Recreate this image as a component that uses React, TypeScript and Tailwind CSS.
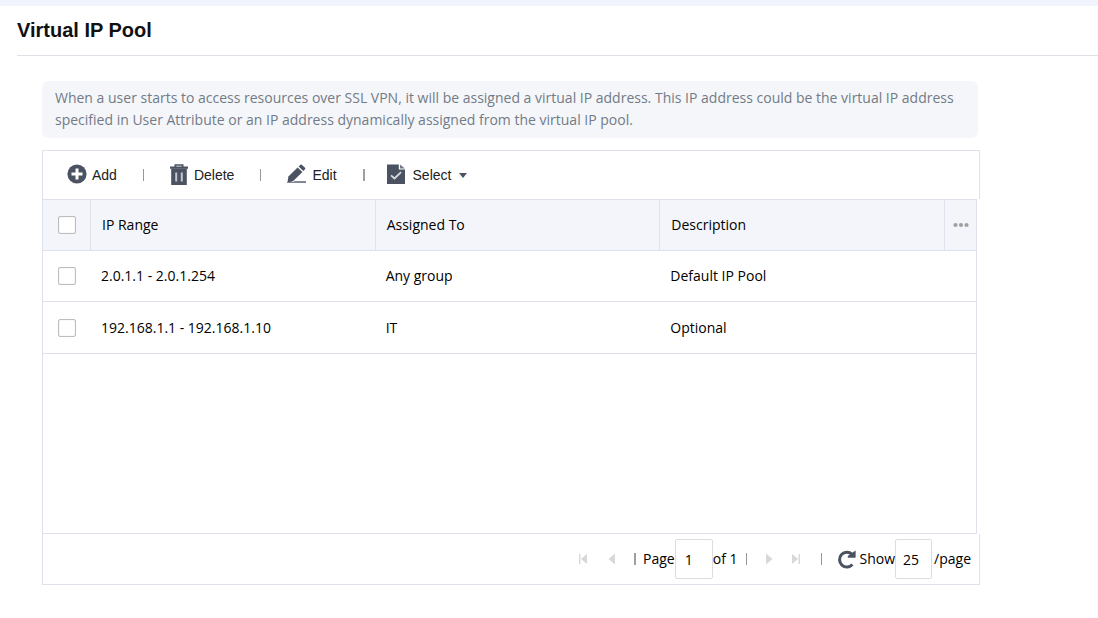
import React from "react";

const rows = [
  { range: "2.0.1.1 - 2.0.1.254", group: "Any group", description: "Default IP Pool", height: "h-[51px]" },
  { range: "192.168.1.1 - 192.168.1.10", group: "IT", description: "Optional", height: "h-[52px]" },
];

const Separator = ({ bold = false }: { bold?: boolean }) => (
  <span className={bold ? "h-3 w-0.5 shrink-0 bg-[#a0a0a0]" : "h-3 w-px shrink-0 bg-[#999999]"} />
);

const AddIcon = () => (
  <svg className="mb-0.5 size-5" viewBox="0 0 20 20" aria-hidden="true">
    <circle cx="10" cy="10" r="9.6" fill="#4b5262" />
    <path d="M8.5 4.5h3v4h4v3h-4v4h-3v-4h-4v-3h4z" fill="#fff" />
  </svg>
);

const DeleteIcon = () => (
  <svg className="mb-0.5 h-[21px] w-[18px]" viewBox="0 0 18 21" aria-hidden="true">
    <path d="M4.5 2.5V.3h9v2.2H18v2.2H0V2.5zm1.8 0h5.4v-.7H6.3z" fill="#4b5262" />
    <path d="M1.2 4.5h15.6V21H1.2z" fill="#4b5262" />
    <path d="M5.2 8.5h2v9h-2zM10.8 8.5h2v9h-2z" fill="#c3c6cc" />
  </svg>
);

const EditIcon = () => (
  <svg className="mb-0.5 size-5" viewBox="0 0 20 20" aria-hidden="true">
    <path d="M10.6 3.5 15.4 8 6 17.3.4 18.7l1-6.1z" fill="#4b5262" />
    <path d="m11.6 2.5 1.7-1.6c.5-.5 1.2-.5 1.7 0l3 2.8c.5.5.5 1.1 0 1.6L16.4 7z" fill="#4b5262" />
    <path d="M7.5 17H19v1.9H0V18h6.5z" fill="#828793" />
  </svg>
);

const SelectIcon = () => (
  <svg className="mb-0.5 h-5 w-[18px]" viewBox="0 0 18 20" aria-hidden="true">
    <path d="M0 .5h11.8v5H18V20H0z" fill="#4b5262" />
    <path d="M13 .5 18 4.6h-5z" fill="#747a87" />
    <path d="m4 11.3 3.5 3.2 6.6-6.3" fill="none" stroke="#d8dade" strokeWidth="1.8" />
  </svg>
);

const RefreshIcon = () => (
  <svg className="block h-5 w-[19px]" viewBox="0 0 19 20" aria-hidden="true">
    <path d="M15.4 15.6a7.4 7.4 0 1 1-.4-10.4l1 1" fill="none" stroke="#4b5262" strokeWidth="3" />
    <path d="M18.6 1.4v7.4h-7.8V7z" fill="#4b5262" />
  </svg>
);

const FirstIcon = () => (
  <svg className="h-3 w-2.5" viewBox="0 0 10 12" aria-hidden="true">
    <path d="M1 1h1.4v10H1zM9 1v10L3 6z" fill="#d8d8d8" />
  </svg>
);

const PrevIcon = () => (
  <svg className="h-3 w-2" viewBox="0 0 8 12" aria-hidden="true">
    <path d="M7 .5v11L.5 6z" fill="#d8d8d8" />
  </svg>
);

const checkboxClass =
  "block size-[18px] appearance-none rounded-xs border border-[#bdbdbd] bg-white shadow-[inset_0_0_1px_#bdbdbd] checked:bg-[#4b5262]";
const toolClass = "flex items-center gap-[5px]";
const headClass = "h-[51px] border-r border-b border-[#dfe1ec] pl-[11px] text-left font-normal";
const cellClass = "border-b border-[#dfe1ec] pl-2.5";

export default function App() {
  return (
    <main className="min-h-screen border-t-[6px] border-[#f1f4fd] bg-white font-['Open_Sans','Noto_Sans',sans-serif] text-sm text-black">
      <header className="ml-[17px] flex h-[50px] items-center border-b border-[#dfe1e8] pb-0.5">
        <h1 className="font-['Liberation_Sans',Arial,sans-serif] text-xl font-bold text-[#111111]">Virtual IP Pool</h1>
      </header>

      <div className="mt-[25px] ml-[42px] max-w-[938px]">
        <p className="mr-0.5 rounded-md bg-[#f5f6fa] px-[13px] pt-1.5 pb-[7px] leading-[22px] text-[#727b86]">
          When a user starts to access resources over SSL VPN, it will be assigned a virtual IP address. This IP address
          could be the virtual IP address specified in User Attribute or an IP address dynamically assigned from the
          virtual IP pool.
        </p>

        <div
          role="toolbar"
          aria-label="IP pool actions"
          className="mt-3 flex h-[49px] items-center gap-[26px] border border-b-0 border-[#dfe1ec] pl-6 font-['Liberation_Sans',Arial,sans-serif] text-[#222222]"
        >
          <button type="button" className={toolClass}><AddIcon />Add</button>
          <Separator />
          <button type="button" className="flex items-center gap-1.5"><DeleteIcon />Delete</button>
          <Separator />
          <button type="button" className={toolClass}><EditIcon />Edit</button>
          <Separator bold />
          <button type="button" aria-haspopup="menu" className="-ml-1 flex items-center gap-2">
            <SelectIcon />Select
            <svg className="h-[5px] w-2" viewBox="0 0 8 5" aria-hidden="true"><path d="M0 0h8L4 5z" fill="#4b5262" /></svg>
          </button>
        </div>

        <div className="mr-[3px] min-h-[335px] border border-[#dfe1ec]">
          <table className="w-full table-fixed border-separate border-spacing-0">
            <colgroup>
              <col className="w-12" />
              <col />
              <col />
              <col />
              <col className="w-[31px]" />
            </colgroup>
            <thead className="bg-[#f4f5fa]">
              <tr>
                <th className="border-r border-b border-[#dfe1ec] pl-[15px]">
                  <input type="checkbox" aria-label="Select all" className={checkboxClass} />
                </th>
                <th className={headClass}>IP Range</th>
                <th className={headClass}>Assigned To</th>
                <th className={headClass}>Description</th>
                <th className="border-b border-[#dfe1ec]">
                  <button type="button" aria-label="Columns" className="mx-auto block">
                    <svg className="h-1.5 w-4" viewBox="0 0 16 6" fill="#a0a0a0" aria-hidden="true">
                      <circle cx="2.5" cy="3" r="2.1" />
                      <circle cx="8" cy="3" r="2.1" />
                      <circle cx="13.5" cy="3" r="2.1" />
                    </svg>
                  </button>
                </th>
              </tr>
            </thead>
            <tbody>
              {rows.map((row) => (
                <tr key={row.range} className={row.height}>
                  <td className="border-b border-[#dfe1ec] pl-[15px]">
                    <input type="checkbox" aria-label={row.range} className={checkboxClass} />
                  </td>
                  <td className={cellClass}>{row.range}</td>
                  <td className={cellClass}>{row.group}</td>
                  <td className={cellClass} colSpan={2}>{row.description}</td>
                </tr>
              ))}
            </tbody>
          </table>
        </div>

        <footer className="flex h-[51px] items-center justify-end border border-t-0 border-[#dfe1ec] pr-2">
          <nav aria-label="Pages" className="flex items-center">
            <button type="button" aria-label="First page" className="mr-5"><FirstIcon /></button>
            <button type="button" aria-label="Previous page" className="mr-[18px]"><PrevIcon /></button>
            <Separator bold />
            <label className="ml-[7px] flex items-center">
              Page
              <input type="text" defaultValue="1" className="h-10 w-[38px] rounded-xs border border-[#dddddd] pl-[9px]" />
            </label>
            <span>of 1</span>
            <span className="mr-[18px] ml-2 flex"><Separator /></span>
            <button type="button" aria-label="Next page" className="mr-[18px] rotate-180"><PrevIcon /></button>
            <button type="button" aria-label="Last page" className="mr-5 rotate-180"><FirstIcon /></button>
            <Separator />
          </nav>
          <button type="button" aria-label="Refresh" className="mr-1 ml-[15px]"><RefreshIcon /></button>
          <label className="flex items-center">
            Show
            <input type="text" defaultValue="25" className="mr-0.5 h-10 w-[37px] rounded-xs border border-[#dddddd] pl-[7px]" />
            /page
          </label>
        </footer>
      </div>
    </main>
  );
}
